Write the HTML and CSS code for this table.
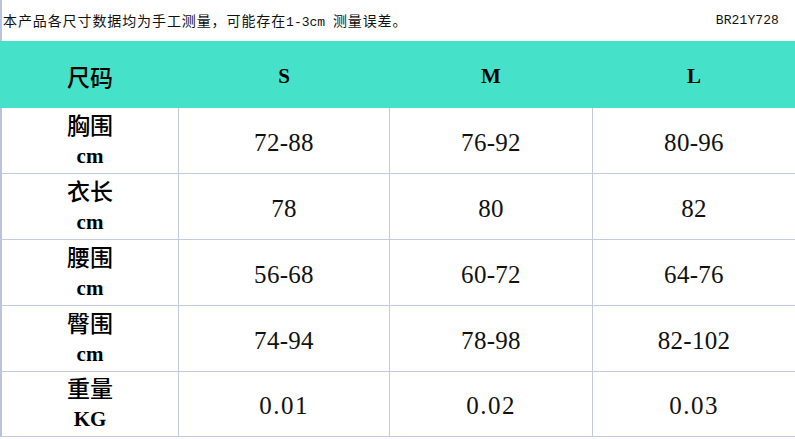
FILE: index.html
```html
<!DOCTYPE html>
<html lang="zh">
<head>
<meta charset="utf-8">
<link rel="stylesheet" href="styles.css">
</head>
<body>
<div class="page">
  <div class="note">
    <span class="note-text">本产品各尺寸数据均为手工测量，可能存在<span class="mono">1-3cm </span>测量误差。</span>
    <span class="code">BR21Y728</span>
  </div>
  <div class="table">
    <div class="hcell lab">尺码</div>
    <div class="hcell size">S</div>
    <div class="hcell size">M</div>
    <div class="hcell size">L</div>

    <div class="cell lab"><span class="zh">胸围</span><span class="unit">cm</span></div>
    <div class="cell val">72-88</div>
    <div class="cell val">76-92</div>
    <div class="cell val">80-96</div>

    <div class="cell lab"><span class="zh">衣长</span><span class="unit">cm</span></div>
    <div class="cell val">78</div>
    <div class="cell val">80</div>
    <div class="cell val">82</div>

    <div class="cell lab"><span class="zh">腰围</span><span class="unit">cm</span></div>
    <div class="cell val">56-68</div>
    <div class="cell val">60-72</div>
    <div class="cell val">64-76</div>

    <div class="cell lab"><span class="zh">臀围</span><span class="unit">cm</span></div>
    <div class="cell val">74-94</div>
    <div class="cell val">78-98</div>
    <div class="cell val">82-102</div>

    <div class="cell lab"><span class="zh">重量</span><span class="unit">KG</span></div>
    <div class="cell val dec">0.01</div>
    <div class="cell val dec">0.02</div>
    <div class="cell val dec">0.03</div>
  </div>
</div>
</body>
</html>
```

FILE: styles.css
```css
html, body {
  margin: 0;
  padding: 0;
  background: #ffffff;
}
.page {
  width: 795px;
  height: 439px;
  font-family: "Liberation Serif", "Noto Sans CJK SC", serif;
  color: #000;
  overflow: hidden;
}
.note {
  height: 41px;
  box-sizing: border-box;
  border-left: 2px solid #b9c3df;
  display: flex;
  align-items: center;
  justify-content: space-between;
  padding: 0 16px 0 1px;
  font-family: "Noto Sans CJK SC", sans-serif;
  font-size: 14px;
  letter-spacing: 0.9px;
  color: #111;
}
.note-text {
  position: relative;
  top: -1px;
}
.mono {
  font-family: "Liberation Mono", monospace;
  font-size: 13px;
  letter-spacing: 0;
}
.code {
  font-family: "Liberation Mono", monospace;
  font-size: 13px;
  letter-spacing: 0.1px;
  color: #111;
}
.table {
  display: grid;
  grid-template-columns: 178px 211px 203px 203px;
  grid-template-rows: 67px 66px 66px 66px 66px 65px;
}
.hcell {
  background: #46e1c9;
  display: flex;
  align-items: center;
  justify-content: center;
  font-weight: bold;
  color: #000;
  box-sizing: border-box;
}
.hcell.lab {
  font-family: "Noto Sans CJK SC", sans-serif;
  font-size: 23px;
  font-weight: 500;
  padding: 3px 0 0 2px;
}
.hcell.size {
  font-family: "Liberation Serif", serif;
  font-size: 21px;
  padding: 4px 0 0 1px;
}
.cell {
  border-bottom: 1px solid #c3c9e0;
  display: flex;
  align-items: center;
  justify-content: center;
  box-sizing: border-box;
}
.cell.val {
  border-left: 1px solid #c3c9e0;
  font-family: "Liberation Serif", serif;
  font-size: 25px;
  letter-spacing: 0.3px;
  color: #111;
  padding-top: 4px;
}
.cell.val.dec {
  letter-spacing: 1.5px;
}
.cell.lab {
  border-left: 2px solid #b9c3df;
  flex-direction: column;
  padding-bottom: 1px;
}
.zh {
  font-family: "Noto Sans CJK SC", sans-serif;
  font-size: 23px;
  font-weight: 500;
  line-height: 32px;
}
.unit {
  font-family: "Liberation Serif", serif;
  font-weight: bold;
  font-size: 21px;
  line-height: 33px;
}
```
